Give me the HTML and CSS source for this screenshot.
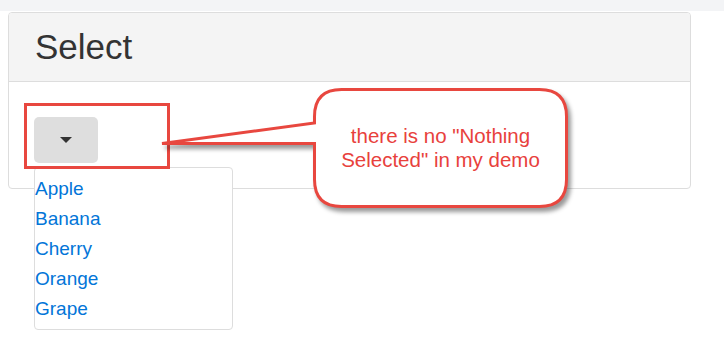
FILE: index.html
```html
<!DOCTYPE html>
<html lang="en">
<head>
    <meta charset="UTF-8">
    <title>Select</title>
    <link rel="stylesheet" href="styles.css">
</head>
<body>
    <div class="topbar"></div>

    <div class="page">
        <div class="panel">
            <div class="panel-heading">
                <h1>Select</h1>
            </div>
            <div class="panel-body">
                <div class="dropdown">
                    <button type="button" class="btn"><span class="caret"></span></button>
                    <ul class="menu">
                        <li><a href="#">Apple</a></li>
                        <li><a href="#">Banana</a></li>
                        <li><a href="#">Cherry</a></li>
                        <li><a href="#">Orange</a></li>
                        <li><a href="#">Grape</a></li>
                    </ul>
                </div>
            </div>
        </div>
    </div>

    <!-- Annotation layer: red box + speech bubble -->
    <svg class="annotations" width="724" height="339" viewBox="0 0 724 339">
        <rect class="mark" x="25.5" y="104.5" width="143" height="63"></rect>
        <path class="bubble" d="M 314.5 123 L 314.5 116.5 Q 314.5 89.5 341.5 89.5 L 539.5 89.5 Q 566.5 89.5 566.5 116.5 L 566.5 179.5 Q 566.5 206.5 539.5 206.5 L 341.5 206.5 Q 314.5 206.5 314.5 179.5 L 314.5 143.5 L 162 143.5 Z"></path>
    </svg>
    <div class="callout">there is no "Nothing<br>Selected" in my demo</div>
</body>
</html>
```

FILE: styles.css
```css
body {
    font-family: "Liberation Sans", Arial, sans-serif;
    margin: 0;
    padding: 0;
    background: #fff;
    color: #333;
    position: relative;
    width: 724px;
    height: 339px;
    overflow: hidden;
}

.topbar {
    height: 11px;
    background: #f3f4f6;
}

.page {
    padding: 1px 0 0 8px;
}

.panel {
    width: 683px;
    box-sizing: border-box;
    border: 1px solid #ddd;
    border-radius: 4px;
}

.panel-heading {
    background: #f4f4f4;
    border-bottom: 1px solid #ddd;
    border-radius: 3px 3px 0 0;
    padding: 14px 26px;
}

.panel-heading h1 {
    margin: 0;
    font-size: 35px;
    font-weight: 400;
    line-height: 40px;
}

.panel-body {
    padding: 35px 25px 25px;
}

.dropdown {
    position: relative;
    width: 64px;
}

.btn {
    display: flex;
    align-items: center;
    justify-content: center;
    width: 64px;
    height: 46px;
    padding: 0;
    border: none;
    border-radius: 5px;
    background: #dedede;
}

.caret {
    width: 0;
    height: 0;
    border-top: 6px solid #333;
    border-left: 6px solid transparent;
    border-right: 6px solid transparent;
}

.menu {
    position: absolute;
    top: 50px;
    left: 0;
    width: 199px;
    box-sizing: border-box;
    margin: 0;
    padding: 6px 0 5px;
    list-style: none;
    background: #fff;
    border: 1px solid #ddd;
    border-radius: 4px;
}

.menu li {
    line-height: 30px;
    font-size: 19px;
}

.menu a {
    color: #0275d8;
    text-decoration: none;
}

.annotations {
    position: absolute;
    left: 0;
    top: 0;
    pointer-events: none;
}

.mark {
    fill: none;
    stroke: #e8473f;
    stroke-width: 3;
}

.bubble {
    fill: #fff;
    stroke: #e8473f;
    stroke-width: 3;
    stroke-linejoin: miter;
    filter: drop-shadow(3px 4px 2px rgba(0, 0, 0, 0.4));
}

.callout {
    position: absolute;
    left: 316px;
    top: 91px;
    width: 249px;
    height: 114px;
    display: flex;
    align-items: center;
    justify-content: center;
    text-align: center;
    font-size: 20.5px;
    line-height: 24px;
    color: #e8413c;
}
```
